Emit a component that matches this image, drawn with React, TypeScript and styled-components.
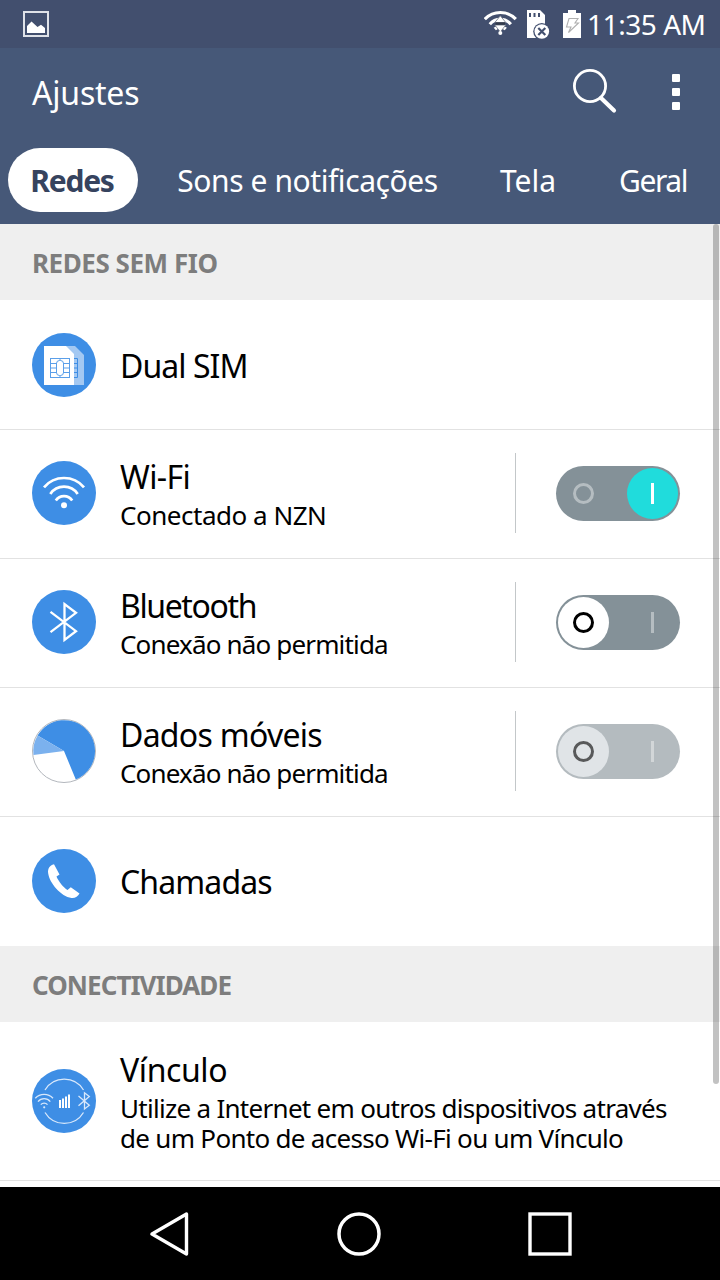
import React from 'react';
import styled, { createGlobalStyle, css } from 'styled-components';

const GlobalStyle = createGlobalStyle`
  * { box-sizing: border-box; }
  body { margin: 0; background: #000; }
`;

const Screen = styled.div`
  position: relative;
  display: flex;
  flex-direction: column;
  width: 720px;
  height: 1280px;
  overflow: hidden;
  background: #fff;
  color: #000;
  font-family: 'Noto Sans', 'Open Sans', sans-serif;
`;

const Label = styled.span<{ $spacing?: number }>`
  letter-spacing: ${(p) => p.$spacing ?? 0}px;
  white-space: nowrap;
`;

const StatusBar = styled.header`
  display: flex;
  align-items: center;
  flex: none;
  height: 48px;
  padding: 0 0 0 23px;
  background: #424f6e;
  color: #fff;
`;

const StatusIcons = styled.div`
  display: flex;
  align-items: center;
  margin-left: auto;
`;

const Clock = styled.div`
  width: 134px;
  padding-left: 1px;
  font-size: 28px;
  line-height: 48px;
`;

const Toolbar = styled.div`
  display: flex;
  align-items: center;
  flex: none;
  height: 88px;
  padding: 0 40px 0 32px;
  background: #465878;
  color: #fff;
`;

const Title = styled.h1`
  flex: 1;
  margin: 0;
  padding-top: 2px;
  font-size: 32px;
  font-weight: 400;
  line-height: 88px;
`;

const MoreButton = styled.div`
  display: flex;
  flex-direction: column;
  gap: 6px;
  margin-left: 54px;
`;

const MoreDot = styled.i`
  width: 8px;
  height: 8px;
  border-radius: 1px;
  background: #fff;
`;

const Tabs = styled.nav`
  display: flex;
  flex: none;
  height: 88px;
  padding: 12px 0 12px 8px;
  overflow: hidden;
  background: #465878;
`;

const Tab = styled.div<{ $width: number; $active?: boolean }>`
  flex: none;
  width: ${(p) => p.$width}px;
  height: 64px;
  border-radius: 32px;
  color: #fff;
  font-size: 30px;
  line-height: 65px;
  text-align: center;
  ${(p) =>
    p.$active &&
    css`
      padding-right: 2px;
      background: #fff;
      color: #36435e;
      font-weight: 700;
    `}
`;

const Content = styled.main`
  flex: 1;
  overflow: hidden;
`;

const SectionHeader = styled.h2`
  height: 76px;
  margin: 0;
  padding-left: 32px;
  background: #efefef;
  color: #7d7d7d;
  font-size: 26px;
  font-weight: 700;
  line-height: 78px;
`;

const Row = styled.section<{ $height: number; $lift?: number; $last?: boolean }>`
  display: flex;
  align-items: center;
  height: ${(p) => p.$height}px;
  padding: 0 40px ${(p) => p.$lift ?? 0}px 32px;
  border-bottom: ${(p) => (p.$last ? 0 : 1)}px solid #e2e2e2;
`;

const RowIcon = styled.svg`
  flex: none;
  width: 64px;
  height: 64px;
  margin-right: 24px;
`;

const RowText = styled.div`
  display: flex;
  flex: 1;
  flex-direction: column;
  gap: 3px;
`;

const RowTitle = styled.div`
  padding-top: 1px;
  font-size: 32px;
  line-height: 40px;

  &:only-child {
    padding-top: 2px;
  }
`;

const RowDetail = styled.div`
  display: flex;
  flex-direction: column;
  font-size: 26px;
  line-height: 30px;
`;

const Divider = styled.div`
  width: 1px;
  height: 80px;
  margin-right: 40px;
  background: #c3c7c9;
`;

const Track = styled.div<{ $disabled?: boolean }>`
  display: flex;
  align-items: center;
  justify-content: space-between;
  width: 124px;
  height: 55px;
  padding: 0 2px;
  border-radius: 28px;
  background: ${(p) => (p.$disabled ? '#b4bbbf' : '#849198')};
`;

const Knob = styled.div<{ $fill: string }>`
  display: flex;
  align-items: center;
  justify-content: center;
  width: 51px;
  height: 51px;
  border-radius: 50%;
  background: ${(p) => p.$fill};
`;

const OffMark = styled.i<{ $color: string }>`
  width: 21px;
  height: 21px;
  border: 3px solid ${(p) => p.$color};
  border-radius: 50%;
`;

const OnMark = styled.i<{ $color: string }>`
  width: 3px;
  height: 21px;
  background: ${(p) => p.$color};
`;

const ScrollThumb = styled.div`
  position: absolute;
  top: 224px;
  right: 1px;
  width: 6px;
  height: 860px;
  border-radius: 3px;
  background: rgba(0, 0, 0, 0.24);
`;

const NavBar = styled.footer`
  display: flex;
  align-items: center;
  flex: none;
  height: 93px;
  padding: 1px 148px 0 149px;
  justify-content: space-between;
  background: #000;
`;

type SwitchState = 'on' | 'off' | 'disabled';

function Switch({ state }: { state: SwitchState }) {
  const on = state === 'on';
  const disabled = state === 'disabled';
  const offColor = on ? '#b5bdc1' : disabled ? '#58595a' : '#000';
  const onColor = on ? '#fff' : disabled ? '#d2d6d8' : '#b5bdc1';
  return (
    <Track $disabled={disabled}>
      <Knob $fill={on ? 'transparent' : disabled ? '#e0e4e7' : '#fff'}>
        <OffMark $color={offColor} />
      </Knob>
      <Knob $fill={on ? '#20dcdc' : 'transparent'}>
        <OnMark $color={onColor} />
      </Knob>
    </Track>
  );
}

const BLUE = '#3e8ee5';

const Disc = () => <circle cx="32" cy="32" r="32" fill={BLUE} />;

const SimIcon = () => (
  <RowIcon viewBox="0 0 64 64">
    <Disc />
    <path d="M34 13H43L52 22V52H42Z" fill="#a3c8f2" />
    <g fill="none" stroke={BLUE} strokeWidth="1">
      <path d="M42 25.500H45.500V44.500H42M42 30.500H45M42 35H45M42 39.500H45" />
    </g>
    <path d="M12 13H34L42 21V52H12Z" fill="#fff" />
    <g fill="none" stroke="#5b9fe9" strokeWidth="1">
      <rect x="18.500" y="25.500" width="19" height="19" />
      <rect x="24.500" y="27.500" width="7" height="15" rx="3" />
      <path d="M18.500 30.500H25M18.500 35H24.500M18.500 39.500H25M31 30.500H37.500M31.500 35H37.500M31 39.500H37.500M28 25.500V27.500M28 42.500V44.500" />
    </g>
  </RowIcon>
);

const WifiIcon = () => (
  <RowIcon viewBox="0 0 64 64">
    <Disc />
    <g fill="none" stroke="#fff" strokeWidth="2.700">
      <path d="M12 26.300A26.200 26.200 0 0 1 52 26.300" />
      <path d="M18.300 33A16.500 16.500 0 0 1 45.700 33" />
      <path d="M23.800 39.600A9.800 9.800 0 0 1 40.200 39.600" />
    </g>
    <circle cx="32" cy="44.300" r="3" fill="#fff" />
  </RowIcon>
);

const BluetoothIcon = () => (
  <RowIcon viewBox="0 0 64 64">
    <Disc />
    <path d="M18.500 21.800L44 41.200L32.500 50V14L44 22.800L18.500 42.200" fill="none" stroke="#fff" strokeWidth="2.300" />
  </RowIcon>
);

const DataIcon = () => (
  <RowIcon viewBox="0 0 64 64">
    <circle cx="32" cy="32" r="31.500" fill="#fff" stroke="#b3b7bd" strokeWidth="1" />
    <path d="M32 32L5.600 16.500A30.800 30.800 0 1 1 43.800 60.500Z" fill={BLUE} />
    <path d="M32 32L1.500 36A30.800 30.800 0 0 1 5.600 16.500Z" fill="#7bb1ee" />
  </RowIcon>
);

const PhoneIcon = () => (
  <RowIcon viewBox="0 0 64 64">
    <Disc />
    <path
      d="M22 15.200C17.500 16.500 15.500 19.500 16.200 24.500C17.500 34 29 47.500 39.500 49C43 49.400 46 47.500 47.500 44.500L38.800 38.300L35.500 41C31.500 38.500 26.500 32.500 24.500 27.500L27.500 25.500Z"
      fill="#fff"
    />
  </RowIcon>
);

const TetherIcon = () => (
  <RowIcon viewBox="0 0 64 64">
    <Disc />
    <g fill="none" stroke="#d8e8fb" strokeWidth="1.300">
      <path d="M13 21A22.500 22.500 0 0 1 51.500 21M13 43.500A22.500 22.500 0 0 0 51.500 43.500" />
      <path d="M3.300 29.300A12 12 0 0 1 21 29.300M6 32.600A8 8 0 0 1 18.300 32.600M8.800 35.600A4.500 4.500 0 0 1 15.500 35.600" />
      <path d="M46.500 27L57.300 36.200L52.500 40V23.800L57.300 27.500L46.500 36.800" />
    </g>
    <circle cx="12.200" cy="38.300" r="1.100" fill="#d8e8fb" />
    <path d="M27 31h2v8h-2zM30 29.500h2v9.500h-2zM33 27.500h2v11.500h-2zM36 25.500h2v13.500h-2z" fill="#fff" />
  </RowIcon>
);

export default function App() {
  return (
    <Screen>
      <GlobalStyle />
      <StatusBar>
        <svg width="26" height="26" viewBox="0 0 26 26">
          <rect x="1" y="1" width="24" height="24" fill="none" stroke="#dfe2e8" strokeWidth="2" />
          <path d="M4 22V15L8.500 10.500L14.500 16L18 13.800L22 17V22Z" fill="#fff" />
        </svg>
        <StatusIcons>
          <svg width="102" height="48" viewBox="0 0 102 48">
            <g fill="none" stroke="#fff" strokeWidth="3.200">
              <path d="M.8 19.200A21.300 21.300 0 0 1 31.800 19.200" />
              <path d="M5.800 24.200A14 14 0 0 1 26.800 24.200" />
              <path d="M10.800 29A8 8 0 0 1 21.800 29" />
            </g>
            <path d="M10.800 22.500L16.300 15.800L21.800 22.500ZM10.800 25L16.300 32L21.800 25Z" fill="#fff" stroke="#6c7383" strokeWidth=".8" />
            <path d="M11.500 22.300H21V24.800H11.500Z" fill="#343b4b" />
            <circle cx="16.300" cy="33" r="2" fill="#fff" />
            <path d="M43 10H56L61 15V38H43Z" fill="#fff" />
            <path d="M45 13h2v4h-2zM49.500 13h2v4h-2zM54 13h2v4h-2z" fill="#424f6e" />
            <circle cx="57.800" cy="31.500" r="8.600" fill="#424f6e" />
            <circle cx="57.800" cy="31.500" r="7.300" fill="#fff" />
            <path d="M54.300 28L61.300 35M61.300 28L54.300 35" stroke="#424f6e" strokeWidth="2.200" />
            <path d="M79 13H84V10H92V13H97V38H79Z" fill="#fff" />
            <path d="M85 18.500H94L91 23H94.500L84.500 32.500L87 27H82.500Z" fill="none" stroke="#b0b0b0" strokeWidth="1.100" />
          </svg>
          <Clock>
            <Label $spacing={-0.45}>11:35 AM</Label>
          </Clock>
        </StatusIcons>
      </StatusBar>

      <Toolbar>
        <Title>
          <Label $spacing={-0.2}>Ajustes</Label>
        </Title>
        <svg width="46" height="46" viewBox="0 0 46 46">
          <circle cx="18" cy="17" r="15.600" fill="none" stroke="#fff" strokeWidth="2.800" />
          <path d="M29 29L42 41.500" stroke="#fff" strokeWidth="4.200" strokeLinecap="round" />
        </svg>
        <MoreButton>
          <MoreDot />
          <MoreDot />
          <MoreDot />
        </MoreButton>
      </Toolbar>

      <Tabs>
        <Tab $width={130} $active>
          <Label $spacing={-1.25}>Redes</Label>
        </Tab>
        <Tab $width={339}>
          <Label $spacing={-0.42}>Sons e notificações</Label>
        </Tab>
        <Tab $width={102}>
          <Label>Tela</Label>
        </Tab>
        <Tab $width={148}>
          <Label $spacing={-1.4}>Geral</Label>
        </Tab>
      </Tabs>

      <Content>
        <SectionHeader>
          <Label $spacing={-0.45}>REDES SEM FIO</Label>
        </SectionHeader>
        <Row $height={130}>
          <SimIcon />
          <RowText>
            <RowTitle>
              <Label $spacing={-0.95}>Dual SIM</Label>
            </RowTitle>
          </RowText>
        </Row>
        <Row $height={129} $lift={2}>
          <WifiIcon />
          <RowText>
            <RowTitle>
              <Label $spacing={-0.6}>Wi-Fi</Label>
            </RowTitle>
            <RowDetail>
              <Label $spacing={-0.48}>Conectado a NZN</Label>
            </RowDetail>
          </RowText>
          <Divider />
          <Switch state="on" />
        </Row>
        <Row $height={129} $lift={2}>
          <BluetoothIcon />
          <RowText>
            <RowTitle>
              <Label $spacing={-1.38}>Bluetooth</Label>
            </RowTitle>
            <RowDetail>
              <Label $spacing={-0.84}>Conexão não permitida</Label>
            </RowDetail>
          </RowText>
          <Divider />
          <Switch state="off" />
        </Row>
        <Row $height={129} $lift={2}>
          <DataIcon />
          <RowText>
            <RowTitle>
              <Label $spacing={-0.72}>Dados móveis</Label>
            </RowTitle>
            <RowDetail>
              <Label $spacing={-0.84}>Conexão não permitida</Label>
            </RowDetail>
          </RowText>
          <Divider />
          <Switch state="disabled" />
        </Row>
        <Row $height={129} $last $lift={1}>
          <PhoneIcon />
          <RowText>
            <RowTitle>
              <Label $spacing={-0.88}>Chamadas</Label>
            </RowTitle>
          </RowText>
        </Row>
        <SectionHeader>
          <Label $spacing={-0.95}>CONECTIVIDADE</Label>
        </SectionHeader>
        <Row $height={159}>
          <TetherIcon />
          <RowText>
            <RowTitle>
              <Label $spacing={-0.4}>Vínculo</Label>
            </RowTitle>
            <RowDetail>
              <Label $spacing={-0.71}>Utilize a Internet em outros dispositivos através</Label>
              <Label $spacing={-0.7}>de um Ponto de acesso Wi-Fi ou um Vínculo</Label>
            </RowDetail>
          </RowText>
        </Row>
      </Content>
      <ScrollThumb />

      <NavBar>
        <svg width="41" height="44" viewBox="0 0 41 44">
          <path d="M3 22L37.500 2V42Z" fill="none" stroke="#fff" strokeWidth="3.400" strokeLinejoin="round" />
        </svg>
        <svg width="44" height="44" viewBox="0 0 44 44">
          <circle cx="22" cy="22" r="20" fill="none" stroke="#fff" strokeWidth="3.500" />
        </svg>
        <svg width="44" height="44" viewBox="0 0 44 44">
          <rect x="2" y="2" width="40" height="40" fill="none" stroke="#fff" strokeWidth="3.400" />
        </svg>
      </NavBar>
    </Screen>
  );
}
